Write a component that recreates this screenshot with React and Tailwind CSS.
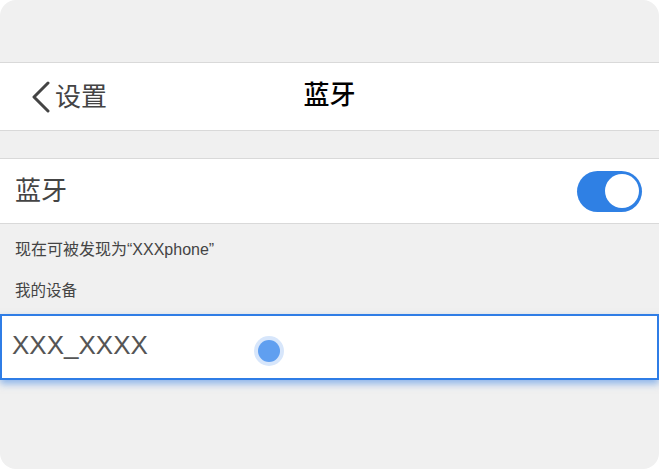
export default function App() {
  const font = { fontFamily: '"Liberation Sans", "Noto Sans CJK SC", sans-serif' };
  return (
    <div className="w-[659px] h-[469px] bg-white" style={font}>
      <div className="w-full h-full rounded-[16px] bg-[#f0f0f0] overflow-hidden flex flex-col">
        <div className="h-[62px]" />
        <div className="h-[69px] bg-white border-y border-[#d9d9d9] relative flex items-center">
          <div className="flex items-center pl-[31px] text-[#444] text-[26px]">
            <svg width="20" height="32" viewBox="0 0 20 32" className="mr-[4px]">
              <path d="M17 2 L3 16 L17 30" fill="none" stroke="#444" strokeWidth="3" strokeLinecap="round" strokeLinejoin="round" />
            </svg>
            <span className="mt-[2px]">设置</span>
          </div>
          <div className="absolute left-0 right-0 text-center text-[26px] text-black font-medium pointer-events-none -mt-[2px]">蓝牙</div>
        </div>
        <div className="h-[27px]" />
        <div className="h-[66px] bg-white border-y border-[#d9d9d9] flex items-center justify-between pl-[15px] pr-[17px]">
          <span className="text-[26px] text-[#444]">蓝牙</span>
          <div className="w-[65px] h-[41px] rounded-full bg-[#2f80e4] flex items-center justify-end pr-[3px]">
            <div className="w-[34px] h-[34px] rounded-full bg-white" />
          </div>
        </div>
        <div className="pl-[15px] pt-[15px] text-[16px] text-[#444] leading-[22px]">现在可被发现为“XXXphone”</div>
        <div className="pl-[15px] pt-[19px] text-[15.5px] text-[#444] leading-[22px]">我的设备</div>
        <div className="mt-[12px] h-[66px] bg-white border-2 border-[#2f7de6] shadow-[0_4px_7px_rgba(47,125,230,0.5)] flex items-center relative">
          <span className="pl-[10px] text-[26px] text-[#555] -mt-[4px]">XXX_XXXX</span>
          <div className="absolute left-[252px] top-[20px] w-[30px] h-[30px] rounded-full bg-[#d7e6fb] flex items-center justify-center">
            <div className="w-[22px] h-[22px] rounded-full bg-[#609ff0]" />
          </div>
        </div>
      </div>
    </div>
  );
}
